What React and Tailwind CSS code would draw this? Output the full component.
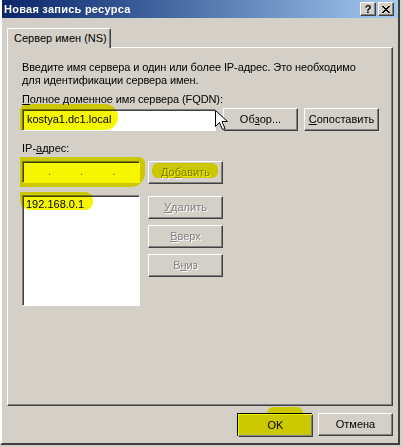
import React from 'react'

const font = "font-['Liberation_Sans',Arial,sans-serif]"

// raised 3D button (Win2k style)
function Btn({ children, disabled, className = '' }) {
  return (
    <div
      className={`h-[23px] w-[75px] flex items-center justify-center border border-t-white border-l-white border-r-[#404040] border-b-[#404040] shadow-[inset_-1px_-1px_0_#808080] bg-[#d4d0c8] text-[11px] ${
        disabled ? 'text-[#808080] [text-shadow:1px_1px_0_#fff]' : 'text-black'
      } ${className}`}
    >
      {children}
    </div>
  )
}

function Sunken({ className = '', children }) {
  return (
    <div className={`border border-t-[#808080] border-l-[#808080] border-r-white border-b-white shadow-[inset_1px_1px_0_#404040] bg-white ${className}`}>
      {children}
    </div>
  )
}

function Mark({ className }) {
  return <div className={`absolute bg-[#f6f600] mix-blend-multiply pointer-events-none ${className}`} />
}

export default function App() {
  return (
    <div className={`relative w-[403px] h-[447px] bg-[#d4d0c8] overflow-hidden ${font} text-[11px] text-black`}>
      {/* window */}
      <div className="w-[400px] h-[445px] flex flex-col border-l-2 border-l-white border-r-2 border-r-[#404040] border-b-2 border-b-[#404040] bg-[#d4d0c8]">
        {/* title bar */}
        <div className="h-[18px] flex items-center pl-[2px] pr-[4px] bg-gradient-to-r from-[#0a246a] to-[#a6caf0]">
          <span className="text-white font-bold text-[11px] leading-none tracking-[0.25px]">Новая запись ресурса</span>
          <div className="ml-auto flex gap-[2px]">
            <div className="w-[16px] h-[14px] flex items-center justify-center bg-[#d4d0c8] border border-t-white border-l-white border-r-[#404040] border-b-[#404040] shadow-[inset_-1px_-1px_0_#808080] font-bold text-[11px] leading-none">?</div>
            <div className="w-[16px] h-[14px] flex items-center justify-center bg-[#d4d0c8] border border-t-white border-l-white border-r-[#404040] border-b-[#404040] shadow-[inset_-1px_-1px_0_#808080]">
              <svg width="8" height="7" viewBox="0 0 8 7">
                <path d="M0 0h2v1h1v1h2v-1h1v-1h2v1h-1v1h-1v1h-1v1h1v1h1v1h1v1h-2v-1h-1v-1h-2v1h-1v1h-2v-1h1v-1h1v-1h1v-1h-1v-1h-1v-1h-1z" fill="#000" />
              </svg>
            </div>
          </div>
        </div>

        {/* tab */}
        <div className="ml-[5px] mt-[10px] flex">
          <div className="relative z-10 w-[104px] h-[20px] -mb-[1px] pl-[6px] flex items-center border border-b-0 border-t-white border-l-white border-r-[#404040] shadow-[inset_-1px_0_0_#808080] bg-[#d4d0c8] rounded-t-[2px]">
            Сервер имен (NS)
          </div>
        </div>

        {/* tab panel */}
        <div className="ml-[5px] w-[386px] h-[359px] border border-t-white border-l-white border-r-[#404040] border-b-[#404040] shadow-[inset_-1px_-1px_0_#808080] pl-[14px] pt-[13px]">
          <p className="leading-[13px] tracking-[-0.1px]">
            Введите имя сервера и один или более IP-адрес. Это необходимо
            <br />
            для идентификации сервера имен.
          </p>
          <p className="mt-[6px] leading-[13px] tracking-[-0.1px]">
            <u>П</u>олное доменное имя сервера (FQDN):
          </p>
          <div className="mt-[2px] flex items-center">
            <Sunken className="w-[194px] h-[22px] flex items-center pl-[4px]">kostya1.dc1.local</Sunken>
            <Btn className="ml-[7px]">
              Об<u>з</u>ор...
            </Btn>
            <Btn className="ml-[6px]">
              <u>С</u>опоставить
            </Btn>
          </div>

          <p className="mt-[11px] leading-[13px]">
            IP-<u>а</u>дрес:
          </p>
          <div className="mt-[4px] flex items-center">
            <Sunken className="w-[118px] h-[22px] flex items-center pl-[25px] gap-[29px] text-[#808080]">
              <span>.</span>
              <span>.</span>
              <span>.</span>
            </Sunken>
            <Btn disabled className="ml-[8px] mt-[2px]">
              До<u>б</u>авить
            </Btn>
          </div>

          <div className="mt-[11px] flex items-start">
            <Sunken className="w-[118px] h-[111px] pl-[3px] pt-[2px] leading-[13px]">192.168.0.1</Sunken>
            <div className="ml-[8px] mt-[1px] flex flex-col gap-[6px]">
              <Btn disabled>
                <u>У</u>далить
              </Btn>
              <Btn disabled>
                <u>В</u>верх
              </Btn>
              <Btn disabled>
                В<u>н</u>из
              </Btn>
            </div>
          </div>
        </div>

        {/* dialog buttons */}
        <div className="mt-[7px] flex justify-end gap-[6px] pr-[5px]">
          <div className="w-[75px] h-[23px] border border-black">
            <Btn className="w-[73px] h-[21px]">OK</Btn>
          </div>
          <Btn>Отмена</Btn>
        </div>
      </div>

      {/* highlighter marks */}
      <Mark className="left-[20px] top-[104px] w-[98px] h-[26px] rounded-r-[14px] rounded-tl-[8px]" />
      <Mark className="left-[20px] top-[157px] w-[125px] h-[30px] rounded-br-[14px] rounded-tr-[6px]" />
      <Mark className="left-[152px] top-[163px] w-[66px] h-[15px] rounded-[6px]" />
      <Mark className="left-[20px] top-[192px] w-[73px] h-[18px] rounded-r-[8px] rounded-bl-[10px]" />
      <Mark className="left-[238px] top-[414px] w-[73px] h-[21px]" />
      <Mark className="left-[267px] top-[407px] w-[36px] h-[8px] rounded-t-[6px]" />

      {/* mouse cursor */}
      <svg className="absolute left-[215px] top-[110px]" width="13" height="21" viewBox="0 0 13 21">
        <path d="M0.5 0.5v16l4-4 3 7 2.5-1-3-7h5.5z" fill="#fff" stroke="#000" strokeWidth="1" />
      </svg>
    </div>
  )
}
